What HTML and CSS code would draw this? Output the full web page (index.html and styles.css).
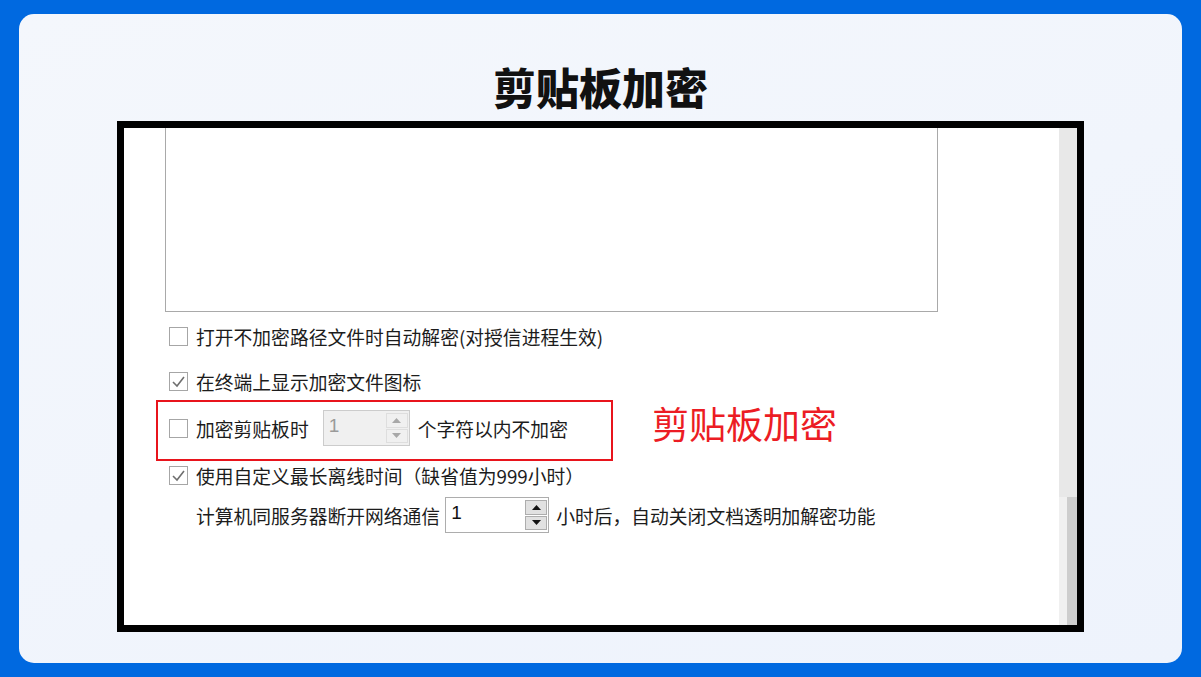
FILE: index.html
```html
<!DOCTYPE html>
<html lang="zh-CN">
<head>
    <meta charset="UTF-8">
    <title>剪贴板加密</title>
    <link rel="stylesheet" href="styles.css">
</head>
<body>
    <div class="card">
        <h1 class="title">剪贴板加密</h1>
        <div class="frame">
            <div class="content">
                <div class="textbox"></div>

                <div class="row row-first">
                    <span class="check"></span>
                    <span class="label">打开不加密路径文件时自动解密(对授信进程生效)</span>
                </div>

                <div class="row row-second">
                    <span class="check checked">
                        <svg width="15" height="13" viewBox="0 0 15 13"><path d="M2 7 L6 11 L13 2" fill="none" stroke="#6f6f6f" stroke-width="1.6"/></svg>
                    </span>
                    <span class="label">在终端上显示加密文件图标</span>
                </div>

                <div class="mark-line">
                    <div class="row highlight">
                        <span class="check"></span>
                        <span class="label">加密剪贴板时</span>
                        <div class="spin spin-off">
                            <span class="spin-value">1</span>
                            <div class="spin-btns">
                                <span class="spin-btn"><svg width="9" height="5" viewBox="0 0 9 5"><path d="M0 5 L4.5 0 L9 5 Z" fill="#a8a8a8"/></svg></span>
                                <span class="spin-btn"><svg width="9" height="5" viewBox="0 0 9 5"><path d="M0 0 L4.5 5 L9 0 Z" fill="#a8a8a8"/></svg></span>
                            </div>
                        </div>
                        <span class="label after-spin">个字符以内不加密</span>
                    </div>
                    <span class="note">剪贴板加密</span>
                </div>

                <div class="row row-fourth">
                    <span class="check checked">
                        <svg width="15" height="13" viewBox="0 0 15 13"><path d="M2 7 L6 11 L13 2" fill="none" stroke="#6f6f6f" stroke-width="1.6"/></svg>
                    </span>
                    <span class="label">使用自定义最长离线时间（缺省值为999小时）</span>
                </div>

                <div class="row row-fifth">
                    <span class="label">计算机同服务器断开网络通信</span>
                    <div class="spin spin-on">
                        <span class="spin-value">1</span>
                        <div class="spin-btns">
                            <span class="spin-btn"><svg width="9" height="5" viewBox="0 0 9 5"><path d="M0 5 L4.5 0 L9 5 Z" fill="#111"/></svg></span>
                            <span class="spin-btn"><svg width="9" height="5" viewBox="0 0 9 5"><path d="M0 0 L4.5 5 L9 0 Z" fill="#111"/></svg></span>
                        </div>
                    </div>
                    <span class="label after-spin">小时后，自动关闭文档透明加解密功能</span>
                </div>
            </div>
            <div class="scrollbar">
                <div class="track"></div>
                <div class="thumb"></div>
            </div>
        </div>
    </div>
</body>
</html>
```

FILE: styles.css
```css
body {
    margin: 0;
    background-color: #0069e0;
    font-family: "Microsoft YaHei", "Noto Sans CJK SC", "Noto Sans", sans-serif;
    color: #1c1c1c;
}

.card {
    box-sizing: border-box;
    width: 1163px;
    height: 649px;
    margin: 14px 0 0 19px;
    padding-top: 51px;
    border-radius: 15px;
    background: linear-gradient(160deg, #f4f7fc 0%, #eef3fc 100%);
}

.title {
    margin: 0 0 14px;
    font-size: 43px;
    line-height: 42px;
    font-weight: 900;
    text-align: center;
    color: #111;
}

.frame {
    box-sizing: border-box;
    width: 967px;
    height: 511px;
    margin: 0 auto;
    border: 7px solid #000;
    background-color: #fff;
    display: flex;
}

.content {
    flex: 1;
    overflow: hidden;
}

.textbox {
    box-sizing: border-box;
    width: 773px;
    height: 184px;
    margin-left: 41px;
    border: 1px solid #a9a9a9;
    border-top: none;
}

.scrollbar {
    width: 18px;
    display: flex;
    flex-direction: column;
}

.track {
    height: 369px;
    background-color: #e8e8e8;
}

.thumb {
    flex: 1;
    background: linear-gradient(90deg, #f0f0f0 0, #f0f0f0 8px, #cdcdcd 8px);
}

.row {
    display: flex;
    align-items: center;
    padding-left: 45px;
    font-size: 18.8px;
}

.row-first {
    height: 30px;
    margin-top: 9px;
}

.row-second {
    height: 30px;
    margin-top: 15px;
}

.row-fourth {
    height: 26px;
    margin-top: 1px;
}

.row-fifth {
    height: 36px;
    margin-top: 9px;
    padding-left: 72px;
}

.check {
    box-sizing: border-box;
    width: 19px;
    height: 19px;
    margin-right: 8px;
    border: 1px solid #a6a6a6;
    background-color: #fff;
    display: flex;
    align-items: center;
    justify-content: center;
}

.label {
    white-space: nowrap;
}

.mark-line {
    display: flex;
    align-items: center;
    margin-top: 4px;
}

.highlight {
    box-sizing: border-box;
    width: 457px;
    height: 61px;
    margin-left: 32px;
    padding: 0 0 5px 11px;
    border: 2px solid #e8141c;
}

.note {
    margin-left: 39px;
    margin-top: -16px;
    font-size: 37px;
    color: #ec1c24;
    white-space: nowrap;
}

.spin {
    box-sizing: border-box;
    height: 36px;
    display: flex;
    align-items: stretch;
    border: 1px solid #adadad;
}

.spin-off {
    width: 87px;
    margin: 0 8px 0 14px;
    background-color: #f0f0f0;
    border-color: #cccccc;
    color: #9a9a9a;
}

.spin-on {
    width: 104px;
    margin: 0 7px 0 5px;
    background-color: #fff;
    color: #111;
}

.spin-value {
    flex: 1;
    padding-left: 5px;
    font-family: "Liberation Sans", Arial, sans-serif;
    font-size: 19px;
    line-height: 30px;
}

.spin-btns {
    width: 22px;
    padding: 2px 1px 2px 0;
    display: flex;
    flex-direction: column;
    gap: 1px;
}

.spin-btn {
    flex: 1;
    display: flex;
    align-items: center;
    justify-content: center;
}

.spin-off .spin-btn {
    background-color: #f0f0f0;
    border: 1px solid #dedede;
}

.spin-on .spin-btn {
    background-color: #e1e1e1;
    border: 1px solid #adadad;
}
```
